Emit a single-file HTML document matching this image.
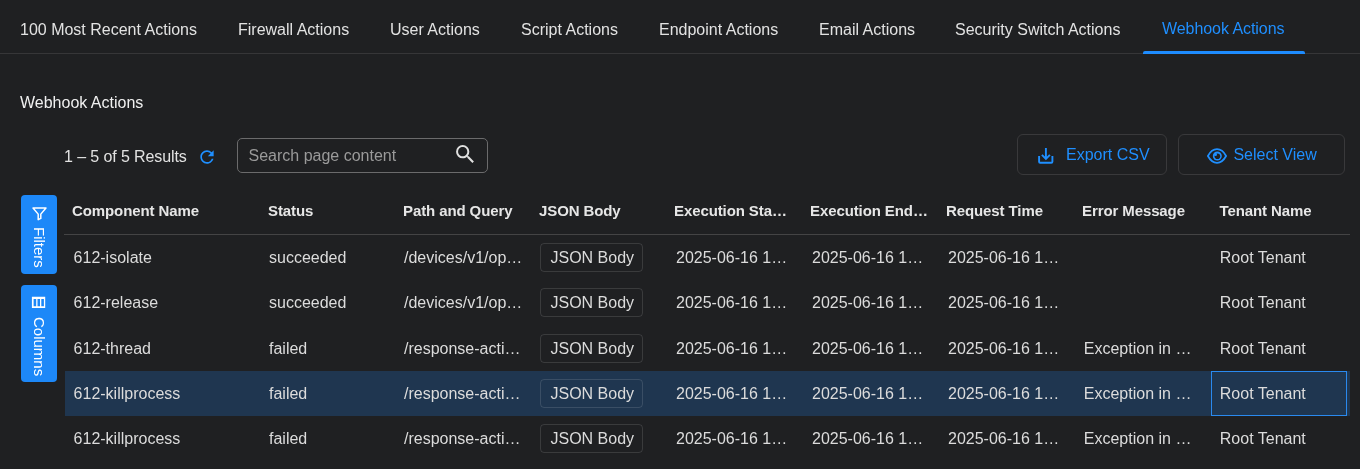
<!DOCTYPE html>
<html>
<head>
<meta charset="utf-8">
<style>
html,body{margin:0;padding:0;}
body{-webkit-font-smoothing:antialiased;width:1360px;height:469px;overflow:hidden;background:#1f2022;font-family:"Liberation Sans",sans-serif;color:#e0e0e0;position:relative;}
#app{position:absolute;left:0;top:0;width:1360px;height:469px;background:#1f2022;will-change:transform;}
.abs{position:absolute;white-space:nowrap;}
.tabs{position:absolute;left:0;top:0;width:1360px;height:53px;border-bottom:1px solid #363638;}
.tab{position:absolute;top:0;height:53px;white-space:nowrap;font-size:16px;line-height:18px;color:#e2e2e2;}
.tab span{position:absolute;left:0;top:21px;}
.tab.active{color:#1f8fff;}
.tab.active .ul{position:absolute;left:0;right:0;top:51px;height:3px;background:#1e8cff;border-radius:2px 2px 0 0;}
.h1{left:20px;top:94px;font-size:16px;line-height:18px;color:#f0f0f0;}
.results{left:64px;top:148px;letter-spacing:-0.1px;font-size:16px;line-height:18px;color:#e2e2e2;}
.search{position:absolute;left:237px;top:138px;width:249px;height:33px;border:1px solid #6b6b6c;border-radius:5px;box-sizing:content-box;}
.search .ph{position:absolute;left:10.5px;top:8px;font-size:16px;line-height:18px;color:#9a9a9a;white-space:nowrap;}
.btn{position:absolute;top:134px;height:39px;border:1px solid #39393b;border-radius:6px;}
.btn .t{position:absolute;top:12px;font-size:16px;line-height:18px;color:#1f8fff;white-space:nowrap;}
.side{position:absolute;left:21px;width:36px;background:#1d88f8;border-radius:4px;}
.side .lbl{position:absolute;font-size:15px;line-height:17px;color:#fff;white-space:nowrap;transform-origin:0 0;transform:rotate(90deg);}
.th{position:absolute;top:202px;letter-spacing:-0.1px;font-size:15px;line-height:17px;font-weight:bold;color:#e6e6e6;white-space:nowrap;}
.hline{position:absolute;left:64px;top:234px;width:1286px;height:1px;background:#444445;}
.row{position:absolute;left:65px;width:1285px;height:45px;}
.row.sel{background:#1f3650;}
.td{position:absolute;font-size:16px;line-height:18px;color:#dcdcdc;white-space:nowrap;}
.jb{position:absolute;left:540px;width:101px;height:27px;border:1px solid rgba(255,255,255,0.12);border-radius:4px;}
.jb span{position:absolute;left:9.5px;top:5px;font-size:16px;line-height:18px;color:#dcdcdc;white-space:nowrap;}
.focus{position:absolute;left:1211px;top:371px;width:134px;height:43px;border:1px solid #2a8af0;}
</style>
</head>
<body>
<div id="app">
<div class="tabs"></div>
<div class="tab" style="left:20px"><span>100 Most Recent Actions</span></div>
<div class="tab" style="left:238px"><span>Firewall Actions</span></div>
<div class="tab" style="left:390px"><span>User Actions</span></div>
<div class="tab" style="left:521px"><span>Script Actions</span></div>
<div class="tab" style="left:659px"><span>Endpoint Actions</span></div>
<div class="tab" style="left:819px"><span>Email Actions</span></div>
<div class="tab" style="left:955px"><span>Security Switch Actions</span></div>
<div class="tab active" style="left:1143px;width:161.5px"><span style="left:19px;top:20px;letter-spacing:-0.06px">Webhook Actions</span><div class="ul"></div></div>

<div class="abs h1">Webhook Actions</div>
<div class="abs results">1 – 5 of 5 Results</div>
<svg class="abs" style="left:196.8px;top:146.5px" width="20" height="20" viewBox="0 0 24 24"><path fill="#1f8fff" d="M17.65 6.35A7.958 7.958 0 0 0 12 4c-4.42 0-7.99 3.58-7.99 8s3.57 8 7.99 8c3.73 0 6.84-2.55 7.73-6h-2.08A5.99 5.99 0 0 1 12 18c-3.31 0-6-2.69-6-6s2.69-6 6-6c1.66 0 3.14.69 4.22 1.78L13 11h7V4l-2.35 2.35z"/></svg>

<div class="search"><div class="ph">Search page content</div>
<svg style="position:absolute;left:214.5px;top:3px" width="24.5" height="24.5" viewBox="0 0 24 24"><path fill="#e0e0e0" d="M15.5 14h-.79l-.28-.27A6.471 6.471 0 0 0 16 9.5 6.5 6.5 0 1 0 9.5 16c1.61 0 3.09-.59 4.23-1.57l.27.28v.79l5 4.99L20.49 19l-4.99-5zm-6 0C7.01 14 5 11.99 5 9.5S7.01 5 9.5 5 14 7.01 14 9.5 11.99 14 9.5 14z"/></svg>
</div>

<div class="btn" style="left:1017px;width:148px">

<div class="t" style="left:48px;top:11px">Export CSV</div></div>
<svg class="abs" style="left:1036px;top:146px" width="20" height="20" viewBox="1036 146 20 20"><path fill="none" stroke="#1f8fff" stroke-width="1.9" d="M1045.9 148.1V158.5M1041.9 154.9L1045.9 158.9L1049.9 154.9M1039.1 156V161.8Q1039.1 162.8 1040.1 162.8H1051.4Q1052.4 162.8 1052.4 161.8V156"/></svg>
<div class="btn" style="left:1178px;width:165px">

<div class="t" style="left:54.4px;top:11px">Select View</div></div>
<svg class="abs" style="left:1204px;top:146px" width="26" height="20" viewBox="1204 146 26 20"><path fill="none" stroke="#1f8fff" stroke-width="1.75" d="M1207.9 156C1210.3 151.6 1213.4 149.2 1217 149.2S1223.7 151.6 1226.1 156C1223.7 160.4 1220.6 162.8 1217 162.8S1210.3 160.4 1207.9 156Z"/><circle cx="1217.3" cy="156" r="4.5" fill="#1f8fff"/><circle cx="1217.4" cy="156.3" r="2.8" fill="#1f2022"/><circle cx="1215.5" cy="154.4" r="1.5" fill="#1f8fff"/></svg>

<div class="side" style="top:195px;height:79px">
<svg style="position:absolute;left:11.6px;top:12.6px;overflow:visible" width="13" height="11.7" viewBox="0 0 20 18"><polygon points="0,0 20,0 12,9.46 12,16 8,18 8,9.46" fill="none" stroke="#fff" stroke-width="2.3" stroke-linejoin="round"/></svg>
<div class="lbl" style="left:26.5px;top:32.2px">Filters</div>
</div>
<div class="side" style="top:285px;height:97px">

<div class="lbl" style="left:26.5px;top:32px">Columns</div>
</div>
<svg class="abs" style="left:30px;top:294px" width="18" height="16" viewBox="30 294 18 16"><path fill="#fff" fill-rule="evenodd" d="M31.9 296.7H45.2V308H31.9Z M33.6 299.1H36.2V306.3H33.6Z M37.5 299.1H40V306.3H37.5Z M41.3 299.1H43.9V306.3H41.3Z"/></svg>

<div class="th" style="left:72px">Component Name</div>
<div class="th" style="left:268px">Status</div>
<div class="th" style="left:403px">Path and Query</div>
<div class="th" style="left:539px">JSON Body</div>
<div class="th" style="left:674px">Execution Sta…</div>
<div class="th" style="left:810px">Execution End…</div>
<div class="th" style="left:946px">Request Time</div>
<div class="th" style="left:1082px">Error Message</div>
<div class="th" style="left:1219.5px">Tenant Name</div>
<div class="hline"></div>

<div class="row sel" style="top:371px"></div>
<div class="focus"></div>

<div class="td" style="left:73.6px;top:249px">612-isolate</div>
<div class="td" style="left:269px;top:249px">succeeded</div>
<div class="td" style="left:404px;top:249px">/devices/v1/op…</div>
<div class="jb" style="top:243px"><span>JSON Body</span></div>
<div class="td" style="left:676px;top:249px">2025-06-16 1…</div>
<div class="td" style="left:812px;top:249px">2025-06-16 1…</div>
<div class="td" style="left:948px;top:249px">2025-06-16 1…</div>
<div class="td" style="left:1219.8px;top:249px">Root Tenant</div>

<div class="td" style="left:73.6px;top:294px">612-release</div>
<div class="td" style="left:269px;top:294px">succeeded</div>
<div class="td" style="left:404px;top:294px">/devices/v1/op…</div>
<div class="jb" style="top:288px"><span>JSON Body</span></div>
<div class="td" style="left:676px;top:294px">2025-06-16 1…</div>
<div class="td" style="left:812px;top:294px">2025-06-16 1…</div>
<div class="td" style="left:948px;top:294px">2025-06-16 1…</div>
<div class="td" style="left:1219.8px;top:294px">Root Tenant</div>

<div class="td" style="left:73.6px;top:340px">612-thread</div>
<div class="td" style="left:269px;top:340px">failed</div>
<div class="td" style="left:404px;top:340px">/response-acti…</div>
<div class="jb" style="top:334px"><span>JSON Body</span></div>
<div class="td" style="left:676px;top:340px">2025-06-16 1…</div>
<div class="td" style="left:812px;top:340px">2025-06-16 1…</div>
<div class="td" style="left:948px;top:340px">2025-06-16 1…</div>
<div class="td" style="left:1083.8px;top:340px">Exception in …</div>
<div class="td" style="left:1219.8px;top:340px">Root Tenant</div>

<div class="td" style="left:73.6px;top:385px">612-killprocess</div>
<div class="td" style="left:269px;top:385px">failed</div>
<div class="td" style="left:404px;top:385px">/response-acti…</div>
<div class="jb" style="top:379px"><span>JSON Body</span></div>
<div class="td" style="left:676px;top:385px">2025-06-16 1…</div>
<div class="td" style="left:812px;top:385px">2025-06-16 1…</div>
<div class="td" style="left:948px;top:385px">2025-06-16 1…</div>
<div class="td" style="left:1083.8px;top:385px">Exception in …</div>
<div class="td" style="left:1219.8px;top:385px">Root Tenant</div>

<div class="td" style="left:73.6px;top:430px">612-killprocess</div>
<div class="td" style="left:269px;top:430px">failed</div>
<div class="td" style="left:404px;top:430px">/response-acti…</div>
<div class="jb" style="top:424px"><span>JSON Body</span></div>
<div class="td" style="left:676px;top:430px">2025-06-16 1…</div>
<div class="td" style="left:812px;top:430px">2025-06-16 1…</div>
<div class="td" style="left:948px;top:430px">2025-06-16 1…</div>
<div class="td" style="left:1083.8px;top:430px">Exception in …</div>
<div class="td" style="left:1219.8px;top:430px">Root Tenant</div>
</div>
</body>
</html>
